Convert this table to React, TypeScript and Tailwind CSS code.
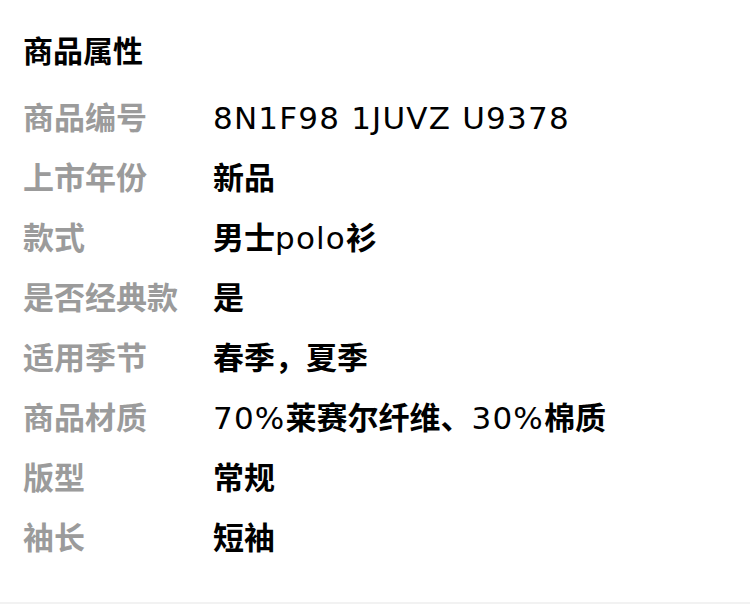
import React from "react";

const rows: [string, string][] = [
  ["商品编号", "8N1F98 1JUVZ U9378"],
  ["上市年份", "新品"],
  ["款式", "男士polo衫"],
  ["是否经典款", "是"],
  ["适用季节", "春季，夏季"],
  ["商品材质", "70%莱赛尔纤维、30%棉质"],
  ["版型", "常规"],
  ["袖长", "短袖"],
];

// 拉丁字符用常规字重，中文用粗体
function Value({ text }: { text: string }) {
  const parts = text.match(/[\u3000-\u9fff\uff00-\uffef]+|[^\u3000-\u9fff\uff00-\uffef]+/g) || [];
  return (
    <span className="text-black">
      {parts.map((p, i) =>
        /[\u3000-\u9fff\uff00-\uffef]/.test(p) ? (
          <span key={i} className="font-bold">{p}</span>
        ) : (
          <span key={i} className="font-normal tracking-[1.2px]">{p}</span>
        )
      )}
    </span>
  );
}

export default function App() {
  return (
    <div
      className="h-[604px] w-[750px] bg-white border-b-2 border-[#f2f2f2] pl-[23px] pr-[24px] pt-[22px]"
      style={{ fontFamily: '"DejaVu Sans", "Noto Sans CJK SC", sans-serif' }}
    >
      {/* 标题 */}
      <h2 className="h-[60px] leading-[60px] text-[30px] font-bold text-black">商品属性</h2>
      <div className="mt-[6px]">
        {rows.map(([label, value]) => (
          <div key={label} className="flex h-[60px] items-center text-[31px]">
            <span className="w-[190px] shrink-0 font-bold text-[#9b9b9b]">{label}</span>
            <Value text={value} />
          </div>
        ))}
      </div>
    </div>
  );
}
